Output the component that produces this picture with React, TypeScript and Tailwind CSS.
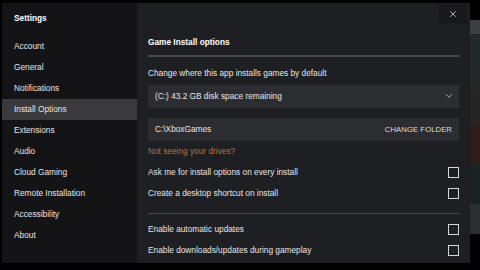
import { X, ChevronDown } from "lucide-react";

const NAV = [
  "Account",
  "General",
  "Notifications",
  "Install Options",
  "Extensions",
  "Audio",
  "Cloud Gaming",
  "Remote Installation",
  "Accessibility",
  "About",
];

function Check() {
  return <div className="w-[11px] h-[11px] border border-[#d8d8d8] shrink-0" />;
}

function Row({ label }: { label: string }) {
  return (
    <div className="flex items-center justify-between h-[21px]">
      <span>{label}</span>
      <Check />
    </div>
  );
}

export default function App() {
  return (
    <div
      className="w-[480px] h-[270px] bg-black flex overflow-hidden text-[8.3px] text-[#e6e6e6]"
      style={{ fontFamily: '"Liberation Sans", Arial, sans-serif' }}
    >
      <div className="flex pl-[2px] pt-[3px] pb-[7px]">
        {/* Sidebar */}
        <div className="w-[135px] bg-[#141417] flex flex-col">
          <div className="px-[12px] pt-[9px] h-[33px] font-bold text-white">Settings</div>
          {NAV.map((n) => (
            <div
              key={n}
              className={`h-[21px] flex items-center px-[12px] ${n === "Install Options" ? "bg-[#3a3a3d]" : ""}`}
            >
              {n}
            </div>
          ))}
        </div>

        {/* Main pane */}
        <div className="w-[333px] bg-[#1e1f22] relative flex flex-col pl-[11px] pr-[11px]">
          <button className="absolute right-[3px] top-[1px] w-[28px] h-[19px] bg-[#19191c] flex items-center justify-center">
            <X className="w-[10px] h-[10px] text-[#cfcfcf]" strokeWidth={2} />
          </button>
          <div className="pt-[33px] font-bold text-white">Game Install options</div>
          <div className="h-[2px] bg-[#48494c] mt-[7px]" />
          <div className="mt-[10px]">Change where this app installs games by default</div>
          <div className="mt-[5px] h-[23px] bg-[#2c2d30] flex items-center justify-between pl-[7px] pr-[5px]">
            <span>(C:) 43.2 GB disk space remaining</span>
            <ChevronDown className="w-[10px] h-[10px] text-[#cfcfcf]" />
          </div>
          <div className="mt-[10px] h-[23px] bg-[#2c2d30] flex items-center justify-between px-[7px]">
            <span>C:\XboxGames</span>
            <span className="text-[7.8px] text-[#dcdcdc]">CHANGE FOLDER</span>
          </div>
          <div className="h-[21px] flex items-center text-[#a8764e]">Not seeing your drives?</div>
          <Row label="Ask me for install options on every install" />
          <Row label="Create a desktop shortcut on install" />
          <div className="h-[1px] bg-[#48494c] mt-[9px] mb-[5px]" />
          <Row label="Enable automatic updates" />
          <Row label="Enable downloads/updates during gameplay" />
        </div>
      </div>

      {/* Background strip */}
      <div className="flex-1 flex flex-col pt-[20px]">
        <div className="h-[14px] bg-[#3c4042]" />
        <div className="h-[90px] bg-gradient-to-b from-[#1d2a2c] to-[#2a2320]" />
        <div className="h-[40px] bg-[#2e1d18]" />
        <div className="h-[40px] bg-[#1b2224]" />
        <div className="h-[30px] bg-[#2a3032]" />
        <div className="flex-1 bg-black" />
      </div>
    </div>
  );
}
